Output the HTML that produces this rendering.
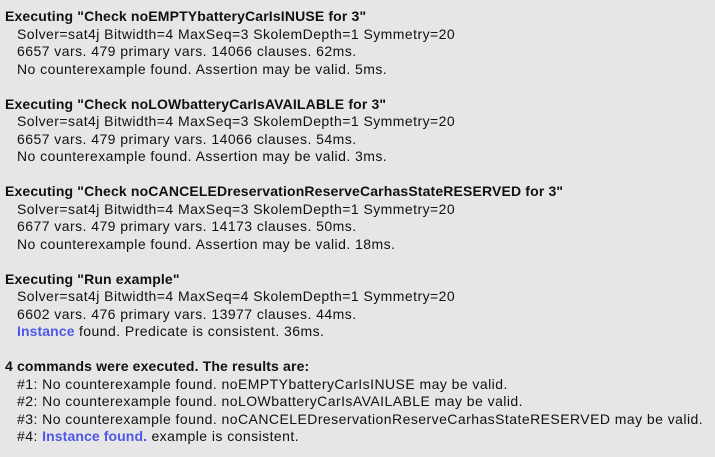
<!DOCTYPE html>
<html><head><style>
html,body{margin:0;padding:0;}
body{width:715px;height:457px;background:#e6e6e6;overflow:hidden;font-family:"Liberation Sans",sans-serif;font-size:14px;color:#111;}
.w{padding:8px 0 0 5px;line-height:17.5px;white-space:pre;}
.b{font-weight:bold;letter-spacing:0.15px;}
.i{padding-left:12px;letter-spacing:0.45px;}
.l{color:#4f58e6;font-weight:bold;letter-spacing:0.1px;}
</style></head><body><div class="w"><div class="b">Executing "Check noEMPTYbatteryCarIsINUSE for 3"</div><div class="i">Solver=sat4j Bitwidth=4 MaxSeq=3 SkolemDepth=1 Symmetry=20</div><div class="i">6657 vars. 479 primary vars. 14066 clauses. 62ms.</div><div class="i">No counterexample found. Assertion may be valid. 5ms.</div><div>&nbsp;</div><div class="b">Executing "Check noLOWbatteryCarIsAVAILABLE for 3"</div><div class="i">Solver=sat4j Bitwidth=4 MaxSeq=3 SkolemDepth=1 Symmetry=20</div><div class="i">6657 vars. 479 primary vars. 14066 clauses. 54ms.</div><div class="i">No counterexample found. Assertion may be valid. 3ms.</div><div>&nbsp;</div><div class="b">Executing "Check noCANCELEDreservationReserveCarhasStateRESERVED for 3"</div><div class="i">Solver=sat4j Bitwidth=4 MaxSeq=3 SkolemDepth=1 Symmetry=20</div><div class="i">6677 vars. 479 primary vars. 14173 clauses. 50ms.</div><div class="i">No counterexample found. Assertion may be valid. 18ms.</div><div>&nbsp;</div><div class="b">Executing "Run example"</div><div class="i">Solver=sat4j Bitwidth=4 MaxSeq=4 SkolemDepth=1 Symmetry=20</div><div class="i">6602 vars. 476 primary vars. 13977 clauses. 44ms.</div><div class="i"><span class="l">Instance</span> found. Predicate is consistent. 36ms.</div><div>&nbsp;</div><div class="b">4 commands were executed. The results are:</div><div class="i">#1: No counterexample found. noEMPTYbatteryCarIsINUSE may be valid.</div><div class="i">#2: No counterexample found. noLOWbatteryCarIsAVAILABLE may be valid.</div><div class="i">#3: No counterexample found. noCANCELEDreservationReserveCarhasStateRESERVED may be valid.</div><div class="i">#4: <span class="l">Instance found.</span> example is consistent.</div></div></body></html>
